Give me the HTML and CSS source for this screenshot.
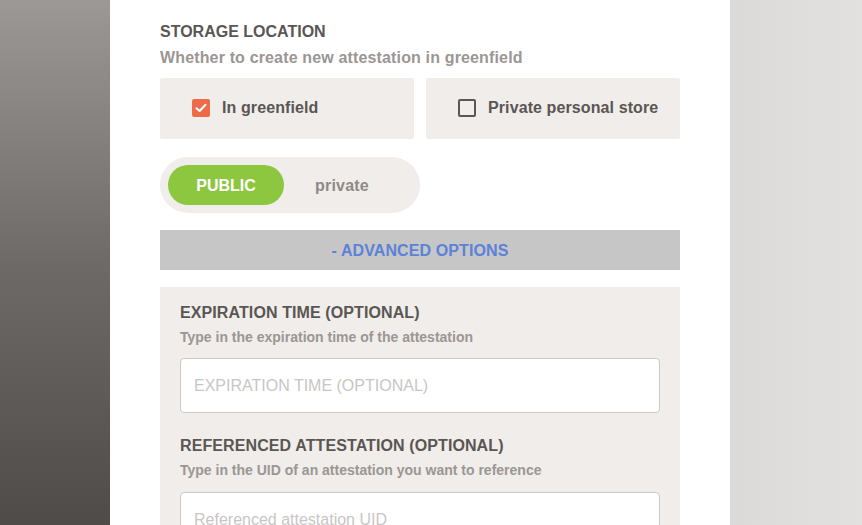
FILE: index.html
```html
<!DOCTYPE html>
<html>
<head>
<meta charset="utf-8">
<link rel="stylesheet" href="styles.css">
</head>
<body>
<div class="layout">
  <aside class="side-left"></aside>
  <main class="panel">
    <h2 class="title">STORAGE LOCATION</h2>
    <p class="subtitle">Whether to create new attestation in greenfield</p>
    <div class="options">
      <label class="option">
        <span class="check checked">
          <svg width="12" height="10" viewBox="0 0 12 10"><path d="M1.5 5.2 L4.6 8 L10.5 1.8" fill="none" stroke="#fff" stroke-width="2" stroke-linecap="round" stroke-linejoin="round"/></svg>
        </span>
        <span class="option-text">In greenfield</span>
      </label>
      <label class="option">
        <span class="check"></span>
        <span class="option-text">Private personal store</span>
      </label>
    </div>
    <div class="toggle">
      <span class="toggle-on">PUBLIC</span>
      <span class="toggle-off">private</span>
    </div>
    <div class="advanced-bar">- ADVANCED OPTIONS</div>
    <section class="advanced">
      <h3 class="field-title">EXPIRATION TIME (OPTIONAL)</h3>
      <p class="field-sub">Type in the expiration time of the attestation</p>
      <div class="input"><span class="placeholder">EXPIRATION TIME (OPTIONAL)</span></div>
      <h3 class="field-title second">REFERENCED ATTESTATION (OPTIONAL)</h3>
      <p class="field-sub">Type in the UID of an attestation you want to reference</p>
      <div class="input"><span class="placeholder">Referenced attestation UID</span></div>
    </section>
  </main>
  <aside class="side-right"></aside>
</div>
</body>
</html>
```

FILE: styles.css
```css
html, body {
  margin: 0;
  padding: 0;
  height: 100%;
  overflow: hidden;
  font-family: "Liberation Sans", Arial, sans-serif;
}
.layout {
  display: grid;
  grid-template-columns: 110px 620px 1fr;
  height: 525px;
}
.side-left {
  background: linear-gradient(to bottom, #9c9895 0%, #6e6a67 50%, #4f4b48 100%);
}
.side-right {
  background: linear-gradient(to right, #dcdad9, #e3e1e0);
}
.panel {
  background: #fff;
  padding: 0 50px;
  overflow: hidden;
}
.title {
  margin: 22px 0 0;
  font-size: 16px;
  line-height: 20px;
  font-weight: 700;
  color: #5a5654;
}
.subtitle {
  margin: 6px 0 0;
  font-size: 16px;
  line-height: 20px;
  font-weight: 700;
  letter-spacing: 0.15px;
  color: #9b9694;
}
.options {
  margin-top: 10px;
  display: grid;
  grid-template-columns: 1fr 1fr;
  gap: 12px;
}
.option {
  height: 61px;
  background: #f0edea;
  border-radius: 2px;
  display: flex;
  align-items: center;
  gap: 12px;
  padding-left: 32px;
  padding-bottom: 1px;
  box-sizing: border-box;
}
.check {
  width: 18px;
  height: 18px;
  box-sizing: border-box;
  border: 2px solid #5a5654;
  border-radius: 2px;
  display: flex;
  align-items: center;
  justify-content: center;
}
.check.checked {
  background: #ef6a49;
  border: none;
}
.option-text {
  font-size: 16px;
  font-weight: 700;
  letter-spacing: 0.1px;
  color: #5a5654;
}
.toggle {
  margin-top: 18px;
  width: 260px;
  height: 56px;
  box-sizing: border-box;
  padding: 8px;
  border-radius: 28px;
  background: #f0edea;
  display: flex;
  align-items: center;
}
.toggle-on {
  width: 116px;
  height: 40px;
  box-sizing: border-box;
  padding-top: 1px;
  border-radius: 20px;
  background: #8dc63f;
  color: #fff;
  font-size: 16px;
  font-weight: 700;
  display: flex;
  align-items: center;
  justify-content: center;
}
.toggle-off {
  margin-left: 31px;
  padding-top: 1px;
  font-size: 16px;
  font-weight: 700;
  letter-spacing: 0.2px;
  color: #8f8a87;
}
.advanced-bar {
  margin-top: 17px;
  height: 40px;
  box-sizing: border-box;
  padding-top: 1px;
  background: #c6c6c6;
  color: #5b82d9;
  font-size: 16px;
  font-weight: 700;
  letter-spacing: 0.1px;
  display: flex;
  align-items: center;
  justify-content: center;
}
.advanced {
  margin-top: 17px;
  background: #f0edea;
  padding: 16px 20px 20px;
}
.field-title {
  margin: 0;
  font-size: 16px;
  line-height: 20px;
  font-weight: 700;
  letter-spacing: 0.1px;
  color: #5a5654;
}
.field-title.second {
  margin-top: 23px;
}
.field-sub {
  margin: 4px 0 0;
  font-size: 14px;
  line-height: 20px;
  font-weight: 700;
  color: #9b9694;
}
.field-title.second + .field-sub {
  margin-top: 4px;
}
.input {
  margin-top: 11px;
  height: 55px;
  box-sizing: border-box;
  background: #fff;
  border: 1px solid #cbc9c8;
  border-radius: 4px;
  padding: 0 13px;
  display: flex;
  align-items: center;
}
.field-title.second + .field-sub + .input {
  margin-top: 12px;
}
.placeholder {
  font-size: 16px;
  color: #c8c6c5;
}
```
